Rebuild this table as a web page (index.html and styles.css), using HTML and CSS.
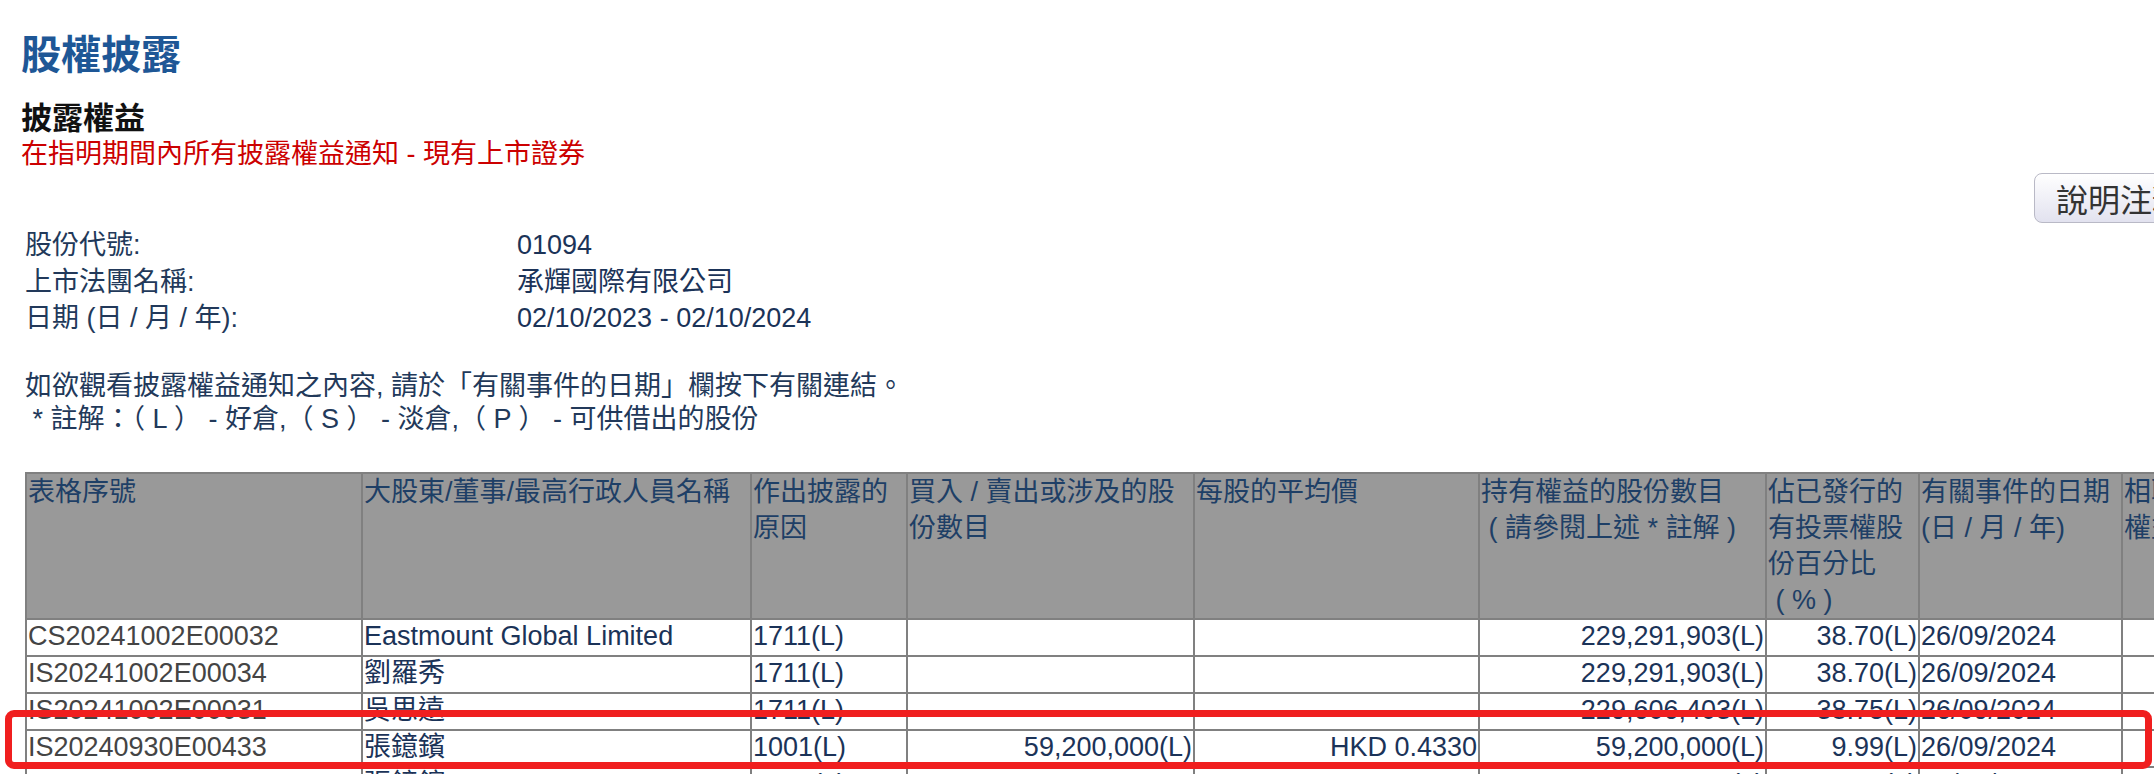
FILE: index.html
```html
<!DOCTYPE html>
<html lang="zh-Hant">
<head>
<meta charset="utf-8">
<title>股權披露</title>
<link rel="stylesheet" href="styles.css">
</head>
<body>
<div class="page">
  <h1 class="title">股權披露</h1>
  <h2 class="subtitle">披露權益</h2>
  <p class="scope">在指明期間內所有披露權益通知 - 現有上市證券</p>
  <div class="toolbar"><button class="notes-btn" type="button">說明注釋</button></div>
  <dl class="info">
    <dt>股份代號:</dt><dd>01094</dd>
    <dt>上市法團名稱:</dt><dd>承輝國際有限公司</dd>
    <dt>日期 (日 / 月 / 年):</dt><dd>02/10/2023 - 02/10/2024</dd>
  </dl>
  <div class="notes">
    <p>如欲觀看披露權益通知之內容, 請於「有關事件的日期」欄按下有關連結。</p>
    <p>&nbsp;* 註解：（ L ） - 好倉,（ S ） - 淡倉,（ P ） - 可供借出的股份</p>
  </div>
  <div class="table-wrap">
    <table class="di-table">
      <colgroup>
        <col class="c-serial"><col class="c-name"><col class="c-reason"><col class="c-bought">
        <col class="c-price"><col class="c-held"><col class="c-pct"><col class="c-date">
        <col class="c-assoc"><col class="c-deb">
      </colgroup>
      <thead>
        <tr>
          <th>表格序號</th>
          <th>大股東/董事/最高行政人員名稱</th>
          <th>作出披露的<br>原因</th>
          <th>買入 / 賣出或涉及的股<br>份數目</th>
          <th>每股的平均價</th>
          <th>持有權益的股份數目<br>&nbsp;( 請參閱上述 * 註解 )</th>
          <th>佔已發行的<br>有投票權股<br>份百分比<br>&nbsp;( % )</th>
          <th>有關事件的日期<br>(日 / 月 / 年)</th>
          <th>相聯法團<br>權益</th>
          <th>債權證權益</th>
        </tr>
      </thead>
      <tbody>
        <tr>
          <td class="serial">CS20241002E00032</td>
          <td>Eastmount Global Limited</td>
          <td>1711(L)</td>
          <td class="num"></td>
          <td class="num"></td>
          <td class="num">229,291,903(L)</td>
          <td class="num">38.70(L)</td>
          <td>26/09/2024</td>
          <td></td><td></td>
        </tr>
        <tr>
          <td class="serial">IS20241002E00034</td>
          <td>劉羅秀</td>
          <td>1711(L)</td>
          <td class="num"></td>
          <td class="num"></td>
          <td class="num">229,291,903(L)</td>
          <td class="num">38.70(L)</td>
          <td>26/09/2024</td>
          <td></td><td></td>
        </tr>
        <tr>
          <td class="serial">IS20241002E00031</td>
          <td>吳思遠</td>
          <td>1711(L)</td>
          <td class="num"></td>
          <td class="num"></td>
          <td class="num">229,606,403(L)</td>
          <td class="num">38.75(L)</td>
          <td>26/09/2024</td>
          <td></td><td></td>
        </tr>
        <tr>
          <td class="serial">IS20240930E00433</td>
          <td>張鐿鑌</td>
          <td>1001(L)</td>
          <td class="num">59,200,000(L)</td>
          <td class="num">HKD 0.4330</td>
          <td class="num">59,200,000(L)</td>
          <td class="num">9.99(L)</td>
          <td>26/09/2024</td>
          <td></td><td></td>
        </tr>
        <tr>
          <td class="serial">IS20240930E00375</td>
          <td>張鐿鑌</td>
          <td>1201(L)</td>
          <td class="num"></td>
          <td class="num"></td>
          <td class="num">844,500(L)</td>
          <td class="num">0.14(L)</td>
          <td>26/09/2024</td>
          <td></td><td></td>
        </tr>
      </tbody>
    </table>
    <div class="highlight"></div>
  </div>
</div>
</body>
</html>
```

FILE: styles.css
```css
html, body {
  margin: 0;
  padding: 0;
  background: #ffffff;
  overflow: hidden;
}

body {
  font-family: "Liberation Sans", "Noto Sans CJK TC", sans-serif;
  color: #22395a;
}

.page {
  position: relative;
  padding: 0 0 40px 21px;
}

.title {
  margin: 29px 0 0;
  font-family: "Noto Sans CJK TC", sans-serif;
  font-size: 40px;
  line-height: 46px;
  font-weight: 700;
  color: #1e5796;
}

.subtitle {
  margin: 23px 0 0;
  font-family: "Noto Sans CJK TC", sans-serif;
  font-size: 31px;
  line-height: 36px;
  font-weight: 700;
  color: #111111;
}

.scope {
  margin: 5px 0 0;
  font-size: 27px;
  line-height: 30px;
  color: #cc0000;
}

.toolbar {
  width: 2185px;
  margin-top: 4px;
  display: flex;
  justify-content: flex-end;
}

.notes-btn {
  font-family: "Noto Sans CJK TC", sans-serif;
  font-size: 32px;
  line-height: 40px;
  padding: 4px 21px;
  border: 1px solid #b9b9c6;
  border-radius: 8px;
  color: #333333;
  background: linear-gradient(#ffffff, #e2e2ef);
}

.info {
  margin: 4px 0 0 4px;
  display: grid;
  grid-template-columns: 492px auto;
  font-size: 27px;
  line-height: 36.5px;
}

.info dt,
.info dd {
  margin: 0;
}

.info dd {
  color: #1b3358;
}

.notes {
  margin: 33px 0 0 4px;
  font-size: 27px;
  line-height: 33.5px;
}

.notes p {
  margin: 0;
}

.table-wrap {
  position: relative;
  margin: 35px 0 0 4px;
}

.di-table {
  table-layout: fixed;
  width: 2426px;
  border-collapse: collapse;
  border: 2px solid #808080;
  font-size: 27px;
}

.c-serial { width: 336px; }
.c-name { width: 389px; }
.c-reason { width: 156px; }
.c-bought { width: 287px; }
.c-price { width: 285px; }
.c-held { width: 287px; }
.c-pct { width: 153px; }
.c-date { width: 203px; }
.c-assoc { width: 130px; }
.c-deb { width: 200px; }

.di-table th,
.di-table td {
  border: 2px solid #808080;
  vertical-align: top;
  text-align: left;
  overflow: hidden;
  white-space: nowrap;
}

.di-table th {
  background: #999999;
  color: #1e3f66;
  font-weight: normal;
  line-height: 36px;
  padding: 0 1px;
}

.di-table td {
  background: #ffffff;
  color: #1b3358;
  line-height: 33px;
  padding: 0 1px 2px;
}

.di-table td.serial {
  color: #444444;
}

.di-table td.num {
  text-align: right;
}

.highlight {
  position: absolute;
  left: -20px;
  top: 238px;
  width: 2147px;
  height: 59px;
  box-sizing: border-box;
  border: 7px solid #f01f1f;
  border-radius: 9px;
  pointer-events: none;
}
```
